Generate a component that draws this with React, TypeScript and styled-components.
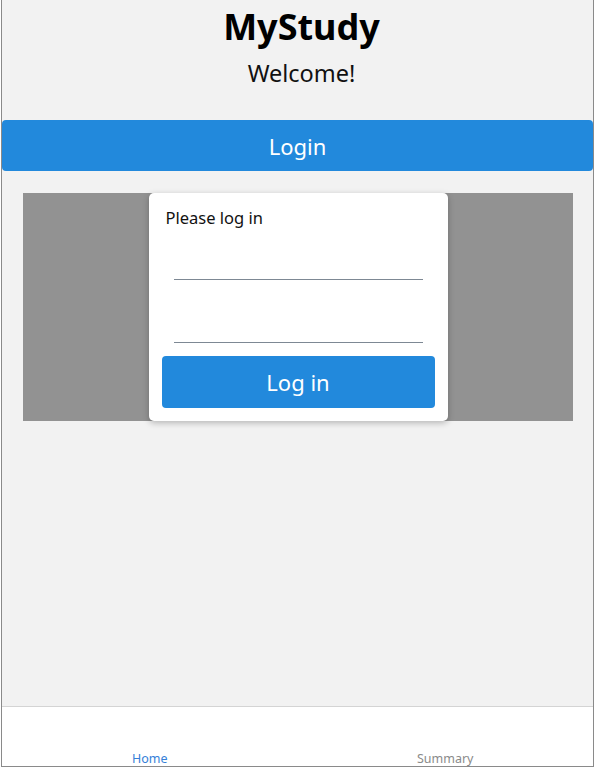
import React from "react";
import styled, { createGlobalStyle } from "styled-components";

const GlobalStyle = createGlobalStyle`
  body {
    margin: 0;
    background: #ffffff;
    font-family: "Noto Sans", "Open Sans", sans-serif;
  }
`;

const Frame = styled.div`
  box-sizing: border-box;
  margin-left: 1px;
  width: 593px;
  height: 767px;
  border: 1px solid #8a8a8a;
  border-top: none;
  background: #f2f2f2;
  display: flex;
  flex-direction: column;
  overflow: hidden;
`;

const Main = styled.main`
  flex: 1;
  display: flex;
  flex-direction: column;
`;

const Header = styled.header`
  display: flex;
  flex-direction: column;
  align-items: center;
  height: 120px;
  padding-left: 8px;
`;

const Title = styled.h1`
  margin: 4px 0 0;
  font-size: 36px;
  line-height: 46px;
  font-weight: 700;
  color: #000;
`;

const Subtitle = styled.div`
  margin-top: 7px;
  font-size: 23.5px;
  line-height: 32px;
  color: #111;
`;

const Button = styled.button<{ $wide?: boolean }>`
  box-sizing: border-box;
  border: none;
  border-radius: 4px;
  background: #2289dc;
  color: #ffffff;
  font-family: inherit;
  font-size: 22px;
  height: ${(props) => (props.$wide ? "51px" : "52px")};
  width: 100%;
  cursor: pointer;
  margin-top: ${(props) => (props.$wide ? "0" : "13px")};
`;

const Panel = styled.section`
  margin: 22px 0 0 21px;
  width: 550px;
  height: 228px;
  background: #929292;
  display: flex;
  justify-content: center;
`;

const Card = styled.div`
  box-sizing: border-box;
  width: 299px;
  padding: 13px;
  background: #ffffff;
  border-radius: 5px;
  box-shadow: 0 2px 6px rgba(0, 0, 0, 0.25);
  display: flex;
  flex-direction: column;
`;

const Prompt = styled.div`
  margin-left: 4px;
  font-size: 16.5px;
  line-height: 24px;
  color: #111;
`;

const Field = styled.input<{ $gap: number }>`
  box-sizing: border-box;
  margin: ${(props) => props.$gap}px 12px 0;
  height: 32px;
  border: none;
  border-bottom: 1px solid #7d8894;
  background: transparent;
  outline: none;
  font-family: inherit;
  font-size: 16px;
`;

const TabBar = styled.nav`
  height: 59px;
  border-top: 1px solid #d4d4d4;
  background: #ffffff;
  display: flex;
  overflow: hidden;
`;

const Tab = styled.div<{ $active?: boolean }>`
  flex: 1;
  padding-top: 44px;
  text-align: center;
  font-size: 12.5px;
  line-height: 15px;
  color: ${(props) => (props.$active ? "#3580d8" : "#8a8a8a")};
`;

export default function App() {
  return (
    <>
      <GlobalStyle />
      <Frame>
        <Main>
          <Header>
            <Title>MyStudy</Title>
            <Subtitle>Welcome!</Subtitle>
          </Header>
          <Button $wide>Login</Button>
          <Panel>
            <Card>
              <Prompt>Please log in</Prompt>
              <Field $gap={18} type="text" />
              <Field $gap={31} type="password" />
              <Button>Log in</Button>
            </Card>
          </Panel>
        </Main>
        <TabBar>
          <Tab $active>Home</Tab>
          <Tab>Summary</Tab>
        </TabBar>
      </Frame>
    </>
  );
}
